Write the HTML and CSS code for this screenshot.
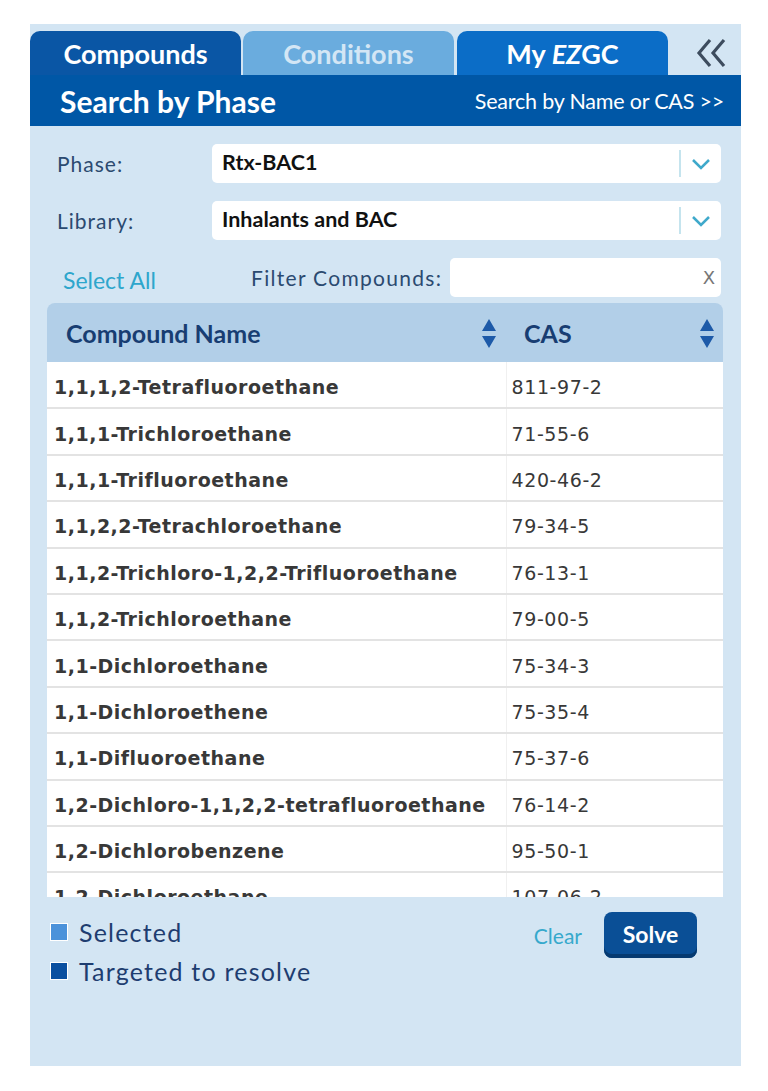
FILE: index.html
```html
<!DOCTYPE html>
<html lang="en">
<head>
  <meta charset="UTF-8" />
  <meta name="viewport" content="width=device-width, initial-scale=1.0" />
  <title>EZGC Method Translator</title>
  <link rel="stylesheet" href="styles.css">
</head>
<body>
  <div class="panel">
    <div class="tabs">
      <div class="tab tab-compounds">Compounds</div>
      <div class="tab tab-conditions">Conditions</div>
      <div class="tab tab-my">My <em>EZ</em>GC</div>
      <div class="collapse">
        <svg width="32" height="30" viewBox="0 0 32 30">
          <path d="M14 2 Q8 9 3 15 Q8 21 14 28 M28 2 Q22 9 17 15 Q22 21 28 28" fill="none" stroke="#3d4c5e" stroke-width="3.2"/>
        </svg>
      </div>
    </div>

    <div class="title-bar">
      <span class="title">Search by Phase</span>
      <span class="title-link">Search by Name or CAS &gt;&gt;</span>
    </div>

    <div class="form">
      <div class="form-row">
        <label class="form-label">Phase:</label>
        <div class="select">
          <span class="select-value">Rtx-BAC1</span>
          <span class="select-arrow">
            <svg width="20" height="12" viewBox="0 0 20 12"><path d="M2 2 L10 10 L18 2" fill="none" stroke="#3fa9cb" stroke-width="2.5"/></svg>
          </span>
        </div>
      </div>
      <div class="form-row">
        <label class="form-label">Library:</label>
        <div class="select">
          <span class="select-value">Inhalants and BAC</span>
          <span class="select-arrow">
            <svg width="20" height="12" viewBox="0 0 20 12"><path d="M2 2 L10 10 L18 2" fill="none" stroke="#3fa9cb" stroke-width="2.5"/></svg>
          </span>
        </div>
      </div>
      <div class="filter-row">
        <a class="select-all" href="#">Select All</a>
        <label class="filter-label">Filter Compounds:</label>
        <div class="filter-input"><span class="filter-clear">X</span></div>
      </div>
    </div>

    <div class="table-wrap">
      <div class="table-head">
        <div class="th th-name">Compound Name
          <svg class="sort" width="14" height="30" viewBox="0 0 14 30"><path d="M7 0 L14 12 L0 12 Z M0 17 L14 17 L7 29 Z" fill="#1d5aa8"/></svg>
        </div>
        <div class="th th-cas">CAS
          <svg class="sort" width="14" height="30" viewBox="0 0 14 30"><path d="M7 0 L14 12 L0 12 Z M0 17 L14 17 L7 29 Z" fill="#1d5aa8"/></svg>
        </div>
      </div>
      <div class="table-body">
        <table class="compounds">
          <tr><td class="name">1,1,1,2-Tetrafluoroethane</td><td class="cas">811-97-2</td></tr>
          <tr><td class="name">1,1,1-Trichloroethane</td><td class="cas">71-55-6</td></tr>
          <tr><td class="name">1,1,1-Trifluoroethane</td><td class="cas">420-46-2</td></tr>
          <tr><td class="name">1,1,2,2-Tetrachloroethane</td><td class="cas">79-34-5</td></tr>
          <tr><td class="name">1,1,2-Trichloro-1,2,2-Trifluoroethane</td><td class="cas">76-13-1</td></tr>
          <tr><td class="name">1,1,2-Trichloroethane</td><td class="cas">79-00-5</td></tr>
          <tr><td class="name">1,1-Dichloroethane</td><td class="cas">75-34-3</td></tr>
          <tr><td class="name">1,1-Dichloroethene</td><td class="cas">75-35-4</td></tr>
          <tr><td class="name">1,1-Difluoroethane</td><td class="cas">75-37-6</td></tr>
          <tr><td class="name">1,2-Dichloro-1,1,2,2-tetrafluoroethane</td><td class="cas">76-14-2</td></tr>
          <tr><td class="name">1,2-Dichlorobenzene</td><td class="cas">95-50-1</td></tr>
          <tr><td class="name">1,2-Dichloroethane</td><td class="cas">107-06-2</td></tr>
        </table>
      </div>
    </div>

    <div class="footer">
      <div class="legend">
        <div class="legend-item"><span class="swatch swatch-selected"></span>Selected</div>
        <div class="legend-item"><span class="swatch swatch-target"></span>Targeted to resolve</div>
      </div>
      <div class="actions">
        <a class="clear" href="#">Clear</a>
        <button class="solve">Solve</button>
      </div>
    </div>
  </div>
</body>
</html>
```

FILE: styles.css
```css
body {
  margin: 0;
  background: #fff;
  font-family: Lato, "Open Sans", sans-serif;
}
.panel {
  margin: 24px 27px 25px 30px;
  height: 1042px;
  background: #d3e5f3;
  overflow: hidden;
}
.tabs {
  display: flex;
  align-items: flex-end;
  padding-top: 7px;
  height: 44px;
}
.tab {
  width: 211px;
  height: 44px;
  margin-right: 2px;
  border-radius: 10px 10px 0 0;
  color: #fff;
  font-weight: bold;
  font-size: 27px;
  text-align: center;
  line-height: 46px;
}
.tab-compounds {
  background: #0a56a5;
}
.tab-conditions {
  background: #6aacde;
  color: #d3e6f5;
  margin-right: 3px;
}
.tab-my {
  background: #0b6dc7;
}
.tab-my em {
  font-style: italic;
}
.collapse {
  flex: 1;
  height: 44px;
  display: flex;
  align-items: center;
  justify-content: center;
  padding-left: 12px;
}
.title-bar {
  background: #0057a6;
  height: 51px;
  display: flex;
  justify-content: space-between;
  align-items: center;
  padding: 0 17px 0 30px;
  color: #fff;
}
.title {
  font-size: 30px;
  font-weight: bold;
}
.title-link {
  font-size: 21.5px;
  letter-spacing: -0.2px;
}
.form {
  padding: 18px 20px 0 27px;
}
.form-row {
  display: flex;
  align-items: center;
  height: 39px;
  margin-bottom: 18px;
}
.form-label {
  width: 155px;
  font-size: 21px;
  color: #2b4a70;
  letter-spacing: 1px;
}
.select {
  flex: 1;
  height: 39px;
  background: #fff;
  border-radius: 5px;
  display: flex;
  align-items: center;
}
.select-value {
  flex: 1;
  padding-left: 10px;
  font-size: 21.5px;
  font-weight: bold;
  color: #111;
  padding-bottom: 4px;
}
.select-arrow {
  width: 40px;
  height: 27px;
  border-left: 2px solid #c5e4ee;
  display: flex;
  align-items: center;
  justify-content: center;
}
.filter-row {
  display: flex;
  align-items: center;
  height: 39px;
}
.select-all {
  width: 188px;
  padding-left: 6px;
  color: #2ea6cc;
  font-size: 23px;
  text-decoration: none;
  padding-top: 4px;
}
.filter-label {
  width: 199px;
  font-size: 21px;
  color: #2b4a70;
  letter-spacing: 1.3px;
}
.filter-input {
  flex: 1;
  height: 39px;
  background: #fff;
  border-radius: 5px;
  display: flex;
  align-items: center;
  justify-content: flex-end;
}
.filter-clear {
  font-family: "DejaVu Sans", sans-serif;
  color: #777;
  font-size: 18px;
  padding-right: 6px;
}
.table-wrap {
  margin: 6px 18px 0 17px;
}
.table-head {
  display: flex;
  height: 59px;
  background: #b2cfe8;
  border-radius: 8px 8px 0 0;
}
.th {
  display: flex;
  align-items: center;
  justify-content: space-between;
  font-size: 25px;
  font-weight: bold;
  color: #183d72;
}
.th-name {
  width: 459px;
  padding: 0 10px 0 19px;
  box-sizing: border-box;
}
.th-cas {
  flex: 1;
  padding: 0 9px 0 18px;
}
.sort {
  margin-top: 2px;
}
.table-body {
  height: 535px;
  overflow: hidden;
  background: #fff;
}
.compounds {
  width: 100%;
  border-collapse: collapse;
  font-family: "DejaVu Sans", Verdana, sans-serif;
  font-size: 19px;
  color: #383838;
}
.compounds tr {
  height: 46.4px;
}
.compounds td {
  padding: 4px 0 0;
  border-bottom: 2px solid #e3e3e3;
}
.compounds .name {
  width: 459px;
  padding-left: 7px;
  font-weight: bold;
  letter-spacing: 0.5px;
  box-sizing: border-box;
  border-right: 1px solid #f0f0f0;
}
.compounds .cas {
  padding-left: 5px;
  letter-spacing: 0.6px;
}
.footer {
  display: flex;
  justify-content: space-between;
  padding: 15px 44px 0 20px;
}
.legend {
  padding-top: 8px;
}
.legend-item {
  display: flex;
  align-items: center;
  font-size: 25px;
  color: #1e3d70;
  letter-spacing: 1.2px;
  height: 23px;
  margin-bottom: 16px;
}
.swatch {
  width: 16px;
  height: 16px;
  margin-right: 11px;
  border: 1px solid #fff;
}
.swatch-selected {
  background: #4b92da;
}
.swatch-target {
  background: #0b50a0;
}
.actions {
  display: flex;
  align-items: flex-start;
}
.clear {
  color: #36a9cc;
  font-size: 21px;
  text-decoration: none;
  margin-top: 11px;
  margin-right: 22px;
}
.solve {
  width: 93px;
  height: 46px;
  background: #0a4f96;
  border: none;
  border-radius: 8px;
  box-shadow: inset 0 -4px 0 #063a70;
  color: #fff;
  font-family: Lato, sans-serif;
  font-weight: bold;
  font-size: 23px;
  padding-bottom: 4px;
}
```
